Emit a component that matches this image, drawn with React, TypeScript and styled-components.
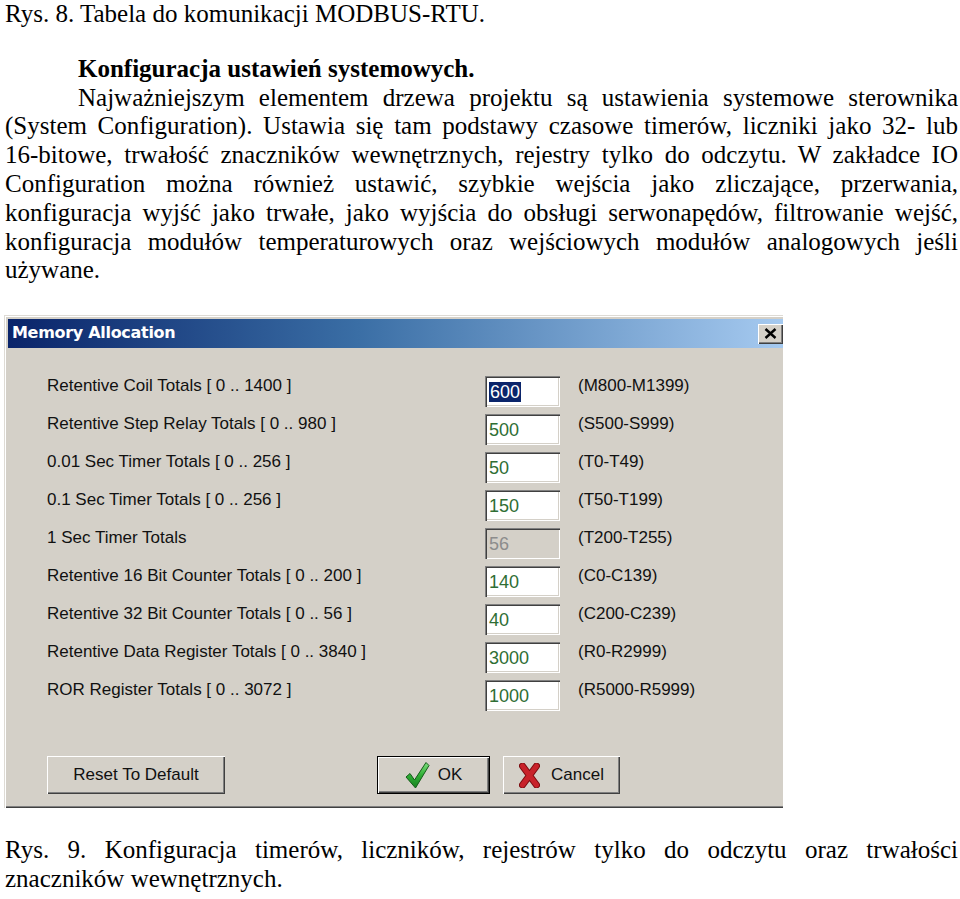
import React from "react";
import styled, { createGlobalStyle } from "styled-components";

const GlobalStyle = createGlobalStyle`
    html, body {
        margin: 0;
        padding: 0;
        background: #ffffff;
    }
    body {
        font-family: "Liberation Serif", "Times New Roman", serif;
        color: #000000;
    }
`;

const winFont = `"Liberation Sans", Arial, sans-serif`;

type MemoryRow = {
    label: string;
    value: string;
    range: string;
    selected?: boolean;
    disabled?: boolean;
};

const rows: MemoryRow[] = [
    { label: "Retentive Coil Totals [ 0 .. 1400 ]", value: "600", range: "(M800-M1399)", selected: true },
    { label: "Retentive Step Relay Totals [ 0 .. 980 ]", value: "500", range: "(S500-S999)" },
    { label: "0.01 Sec Timer Totals [ 0 .. 256 ]", value: "50", range: "(T0-T49)" },
    { label: "0.1 Sec Timer Totals [ 0 .. 256 ]", value: "150", range: "(T50-T199)" },
    { label: "1 Sec Timer Totals", value: "56", range: "(T200-T255)", disabled: true },
    { label: "Retentive 16 Bit Counter Totals [ 0 .. 200 ]", value: "140", range: "(C0-C139)" },
    { label: "Retentive 32 Bit Counter Totals [ 0 .. 56 ]", value: "40", range: "(C200-C239)" },
    { label: "Retentive Data Register Totals [ 0 .. 3840 ]", value: "3000", range: "(R0-R2999)" },
    { label: "ROR Register Totals [ 0 .. 3072 ]", value: "1000", range: "(R5000-R5999)" },
];

// word joiner after the hyphen keeps "16-bitowe" on one line, as in the document
const introText =
    "Najważniejszym elementem drzewa projektu są ustawienia systemowe sterownika " +
    "(System Configuration). Ustawia się tam podstawy czasowe timerów, liczniki jako 32- lub " +
    "16-\u2060bitowe, trwałość znaczników wewnętrznych, rejestry tylko do odczytu. W zakładce IO " +
    "Configuration można również ustawić, szybkie wejścia jako zliczające, przerwania, " +
    "konfiguracja wyjść jako trwałe, jako wyjścia do obsługi serwonapędów, filtrowanie wejść, " +
    "konfiguracja modułów temperaturowych oraz wejściowych modułów analogowych jeśli używane.";

const Page = styled.div`
    width: 953px;
    padding: 0 2px 0 5px;
    font-size: 25px;
    line-height: 28.8px;
`;

const Caption = styled.p`
    margin: 0;
    text-align: justify;
`;

const Headline = styled.h2`
    margin: 26px 0 0;
    padding-left: 73px;
    font-size: 25px;
    font-weight: 700;
    line-height: 28.8px;
`;

const Paragraph = styled.p`
    margin: 0;
    text-indent: 73px;
    text-align: justify;
`;

const Dialog = styled.div`
    width: 779px;
    margin: 30px 0 28px -1px;
    padding: 4px 0 4px 4px;
    box-sizing: border-box;
    background: #d4d0c8;
    box-shadow: inset 1px 1px #dedbd5, inset 2px 2px #ffffff, inset 0 -1px #404040,
        inset 0 -2px #808080;
    font-family: ${winFont};
    overflow: hidden;
`;

const TitleBar = styled.div`
    height: 29px;
    display: flex;
    align-items: center;
    justify-content: space-between;
    padding-left: 4px;
    background: linear-gradient(to right, #0a246a 0%, #3a6ea5 45%, #a6caf0 100%);
`;

const Title = styled.span`
    color: #ffffff;
    font-family: "DejaVu Sans", Verdana, sans-serif;
    font-size: 16px;
    font-weight: 700;
    letter-spacing: -0.3px;
`;

const CloseButton = styled.div`
    width: 25px;
    height: 20px;
    display: flex;
    align-items: center;
    justify-content: center;
    background: #d4d0c8;
    box-shadow: inset 1px 1px #ffffff, inset -1px -1px #404040, inset -2px -2px #808080;
`;

const Body = styled.div`
    padding: 26px 0 10px 39px;
`;

const Row = styled.div`
    display: grid;
    grid-template-columns: 420px 75px auto;
    column-gap: 18px;
    align-items: start;
    height: 38px;
`;

const Label = styled.span`
    padding-top: 2px;
    font-size: 17px;
    line-height: 20px;
    color: #111111;
    white-space: nowrap;
`;

const Field = styled.div<{ $disabled?: boolean }>`
    margin-top: 2px;
    width: 75px;
    height: 31px;
    box-sizing: border-box;
    display: flex;
    align-items: center;
    padding: 1px 0 0 4px;
    background: ${(p) => (p.$disabled ? "#d4d0c8" : "#ffffff")};
    box-shadow: inset 1px 1px #808080, inset 2px 2px #404040, inset -1px -1px #ffffff,
        inset -2px -2px #d4d0c8;
    color: ${(p) => (p.$disabled ? "#8c8c8c" : "#2f6e34")};
    font-size: 18px;
    line-height: 20px;
`;

const Selected = styled.span`
    background: #0a246a;
    color: #ffffff;
    padding: 0 1px;
`;

const Range = styled.span`
    padding-top: 2px;
    font-size: 17px;
    line-height: 20px;
    color: #111111;
`;

const Footer = styled.div`
    display: flex;
    margin-top: 40px;
`;

const Button = styled.div<{ $width: number; $default?: boolean; $gap?: number }>`
    width: ${(p) => p.$width}px;
    height: 38px;
    margin-left: ${(p) => p.$gap ?? 0}px;
    box-sizing: border-box;
    display: flex;
    align-items: center;
    justify-content: center;
    gap: ${(p) => (p.$default ? 8 : 11)}px;
    font-size: 17px;
    color: #111111;
    background: #d4d0c8;
    border: ${(p) => (p.$default ? "1px solid #000000" : "none")};
    box-shadow: inset 1px 1px #ffffff, inset -1px -1px #404040, inset -2px -2px #808080;
`;

function CheckIcon() {
    return (
        <svg width="25" height="28" viewBox="0 0 25 28">
            <defs>
                <linearGradient id="chk" x1="0" y1="0" x2="0" y2="1">
                    <stop offset="0" stopColor="#7fe07f" />
                    <stop offset="0.5" stopColor="#2fae35" />
                    <stop offset="1" stopColor="#17801f" />
                </linearGradient>
            </defs>
            <path
                d="M1 16 L5 12.5 L9.5 19 L21 1.5 L24 4.5 L10.5 27 Z"
                fill="url(#chk)"
                stroke="#145c19"
                strokeWidth="1"
                strokeLinejoin="round"
            />
        </svg>
    );
}

function CrossIcon() {
    return (
        <svg width="21" height="25" viewBox="0 0 21 25">
            <path
                d="M3.5 3 L17.5 22 M17.5 3 L3.5 22"
                stroke="#7a0c10"
                strokeWidth="7"
                strokeLinecap="round"
            />
            <path
                d="M3.5 3 L17.5 22 M17.5 3 L3.5 22"
                stroke="#c8222a"
                strokeWidth="5"
                strokeLinecap="round"
            />
        </svg>
    );
}

function CloseGlyph() {
    return (
        <svg width="13" height="11" viewBox="0 0 13 11">
            <path d="M1.5 1 L11.5 10 M11.5 1 L1.5 10" stroke="#000000" strokeWidth="2.4" />
        </svg>
    );
}

function App() {
    return (
        <>
            <GlobalStyle />
            <Page>
                <Caption>Rys. 8. Tabela do komunikacji MODBUS-RTU.</Caption>

                <Headline>Konfiguracja ustawień systemowych.</Headline>
                <Paragraph>{introText}</Paragraph>

                <Dialog>
                    <TitleBar>
                        <Title>Memory Allocation</Title>
                        <CloseButton>
                            <CloseGlyph />
                        </CloseButton>
                    </TitleBar>
                    <Body>
                        {rows.map((row) => (
                            <Row key={row.label}>
                                <Label>{row.label}</Label>
                                <Field $disabled={row.disabled}>
                                    {row.selected ? <Selected>{row.value}</Selected> : row.value}
                                </Field>
                                <Range>{row.range}</Range>
                            </Row>
                        ))}
                        <Footer>
                            <Button $width={178}>Reset To Default</Button>
                            <Button $width={113} $gap={152} $default>
                                <CheckIcon />
                                OK
                            </Button>
                            <Button $width={117} $gap={13}>
                                <CrossIcon />
                                Cancel
                            </Button>
                        </Footer>
                    </Body>
                </Dialog>

                <Caption>
                    Rys. 9. Konfiguracja timerów, liczników, rejestrów tylko do odczytu oraz
                    trwałości znaczników wewnętrznych.
                </Caption>
            </Page>
        </>
    );
}

export default App;
